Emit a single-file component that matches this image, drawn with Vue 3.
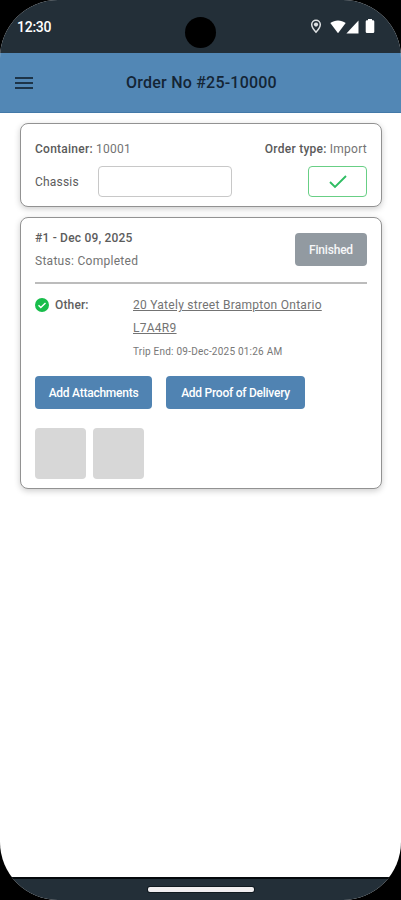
<template>
  <div class="device">
    <div class="screen">
      <header class="status-bar">
        <span class="clock">12:30</span>
        <span class="camera"></span>
        <div class="status-icons">
          <svg class="pin" width="12" height="15" viewBox="0 0 12 15">
            <path
              d="M6 1.200a4.300 4.300 0 0 0-4.300 4.300C1.700 8.600 6 13.200 6 13.200s4.300-4.600 4.300-7.700A4.300 4.300 0 0 0 6 1.200z"
              fill="none"
              stroke="#dde0e2"
              stroke-width="1.500"
            />
            <circle cx="6" cy="5.600" r="2.100" fill="#dde0e2" />
          </svg>
          <svg class="wifi" width="16" height="14" viewBox="0 0 16 14">
            <path d="M.3 3.100C4.800-.4 11.200-.4 15.700 3.100L8 13.200z" fill="#fff" />
          </svg>
          <svg class="signal" width="13" height="14" viewBox="0 0 13 14">
            <path d="M12.500.6v13H.4z" fill="#fff" />
          </svg>
          <svg class="battery" width="10" height="15" viewBox="0 0 10 15">
            <path
              d="M3 0h4v1.300h1a1.300 1.300 0 0 1 1.300 1.300v10.200a1.300 1.300 0 0 1-1.300 1.300H2a1.300 1.300 0 0 1-1.300-1.300V2.600A1.300 1.300 0 0 1 2 1.300h1z"
              fill="#fff"
            />
          </svg>
        </div>
      </header>

      <nav class="app-bar">
        <button class="menu" aria-label="Menu"><i></i><i></i><i></i></button>
        <h1>Order No #{{ order.number }}</h1>
      </nav>

      <main>
        <section class="card summary">
          <div class="row">
            <p class="container-no"><b>Container:</b> {{ order.container }}</p>
            <p class="order-type"><b>Order type:</b> {{ order.type }}</p>
          </div>
          <div class="row chassis-row">
            <label for="chassis">Chassis</label>
            <input id="chassis" v-model="chassis" type="text" />
            <button class="confirm" aria-label="Save chassis">
              <svg width="18" height="14" viewBox="0 0 18 14">
                <path d="M1 7l5 5L17 1" fill="none" stroke="#2fbd63" stroke-width="1.900" />
              </svg>
            </button>
          </div>
        </section>

        <section class="card trip">
          <div class="trip-head">
            <div>
              <h2>#1 - Dec 09, 2025</h2>
              <p class="status">Status: Completed</p>
            </div>
            <button class="finished">Finished</button>
          </div>

          <div class="stop">
            <svg class="done" width="14" height="14" viewBox="0 0 14 14">
              <circle cx="7" cy="7" r="7" fill="#18bd4b" />
              <path d="M3.500 7.300l2.300 2.300 4.700-4.700" fill="none" stroke="#fff" stroke-width="1.400" />
            </svg>
            <span class="stop-label">Other:</span>
            <div class="stop-info">
              <a class="address">20 Yately street Brampton Ontario<br />L7A4R9</a>
              <p class="trip-end">Trip End: 09-Dec-2025 01:26 AM</p>
            </div>
          </div>

          <div class="actions">
            <button class="attach">Add Attachments</button>
            <button class="proof">Add Proof of Delivery</button>
          </div>

          <div class="thumbs">
            <span v-for="n in 2" :key="n" class="thumb"></span>
          </div>
        </section>
      </main>

      <footer class="nav-bar"><span class="handle"></span></footer>
    </div>
  </div>
</template>

<script setup>
import { ref } from 'vue'

const chassis = ref('')

const order = {
  number: '25-10000',
  container: '10001',
  type: 'Import',
}
</script>

<style>
body {
  margin: 0;
  background: #000;
}
</style>

<style scoped>
* {
  box-sizing: border-box;
}

h1,
h2,
p {
  margin: 0;
}

button {
  font-family: inherit;
  padding: 0;
  border: 0;
}

.device {
  width: 401px;
  height: 900px;
  background: #000;
  font-family: Roboto, sans-serif;
}

.screen {
  display: flex;
  flex-direction: column;
  height: 900px;
  overflow: hidden;
  border-radius: 58px;
  background: #fff;
}

.status-bar {
  position: relative;
  display: flex;
  flex: none;
  align-items: center;
  justify-content: space-between;
  height: 53px;
  padding: 0 26px 0 17px;
  background: #232f38;
}

.clock {
  color: #fff;
  font-size: 14px;
  font-weight: 500;
  letter-spacing: -0.25px;
}

.camera {
  position: absolute;
  top: 17px;
  left: 185px;
  width: 31px;
  height: 31px;
  border-radius: 50%;
  background: #000;
}

.status-icons {
  display: flex;
  align-items: center;
}

.wifi {
  margin-left: 8px;
}

.battery {
  margin-left: 6px;
}

.app-bar {
  display: flex;
  flex: none;
  align-items: center;
  height: 60px;
  padding: 0 15px;
  background: #5287b5;
  border-bottom: 1px solid #4379a8;
}

.menu {
  display: flex;
  flex-direction: column;
  gap: 3px;
  width: 18px;
  background: none;
}

.menu i {
  height: 2px;
  background: #1d3448;
}

h1 {
  flex: 1;
  padding-right: 16px;
  color: #142535;
  font-size: 16px;
  font-weight: 500;
  letter-spacing: 0.22px;
  line-height: 22px;
  text-align: center;
}

main {
  display: flex;
  flex: 1;
  flex-direction: column;
  gap: 10px;
  padding: 10px 19px 0 20px;
}

.card {
  padding: 0 14px;
  border: 1px solid #929292;
  border-radius: 8px;
  background: #fff;
  box-shadow: 0 2px 6px rgba(0, 0, 0, 0.2);
  color: #737373;
  font-size: 12px;
}

.summary {
  height: 84px;
}

.row {
  display: flex;
  align-items: center;
  justify-content: space-between;
}

.summary .row:first-child {
  height: 20px;
  margin-top: 15px;
}

.row p {
  letter-spacing: 0.25px;
}

b {
  color: #5a5a5a;
  font-weight: 500;
}

.chassis-row {
  height: 31px;
  margin-top: 7px;
}

label {
  width: 63px;
  color: #5c5c5c;
  letter-spacing: 0.2px;
}

input {
  width: 134px;
  height: 31px;
  border: 1px solid #c8c8c8;
  border-radius: 4px;
  background: #fff;
}

.confirm {
  display: flex;
  align-items: center;
  justify-content: center;
  width: 59px;
  height: 31px;
  margin-left: auto;
  border: 1px solid #68cf85;
  border-radius: 4px;
  background: #fff;
}

.trip {
  height: 272px;
}

.trip-head {
  display: flex;
  justify-content: space-between;
  height: 66px;
  padding-top: 9px;
  border-bottom: 2px solid #bcbcbc;
}

h2 {
  color: #5c5c5c;
  font-size: 12px;
  font-weight: 500;
  letter-spacing: 0.2px;
  line-height: 23px;
}

.status {
  letter-spacing: 0.28px;
  line-height: 23px;
}

.finished {
  width: 72px;
  height: 33px;
  margin-top: 6px;
  border-radius: 4px;
  background: #929aa1;
  color: #f6f7f8;
  font-size: 12px;
  font-weight: 500;
  letter-spacing: -0.2px;
}

.stop {
  display: flex;
  height: 92px;
  padding-top: 10px;
  line-height: 23px;
}

.done {
  flex: none;
  margin-top: 4px;
}

.stop-label {
  width: 78px;
  margin-left: 6px;
  color: #606060;
  font-weight: 500;
  letter-spacing: 0.15px;
}

.stop-info {
  flex: 1;
  white-space: nowrap;
}

.address {
  letter-spacing: 0.27px;
  text-decoration: underline;
}

.trip-end {
  color: #777;
  font-size: 10px;
  letter-spacing: 0.22px;
}

.actions {
  display: flex;
  gap: 14px;
}

.actions button {
  height: 33px;
  border-radius: 4px;
  background: #5083b2;
  color: #fff;
  font-size: 12px;
  font-weight: 500;
  letter-spacing: -0.25px;
}

.attach {
  width: 117px;
}

.proof {
  width: 139px;
}

.thumbs {
  display: flex;
  gap: 7px;
  margin-top: 19px;
}

.thumb {
  width: 51px;
  height: 51px;
  border-radius: 4px;
  background: #d7d7d7;
}

.nav-bar {
  display: flex;
  flex: none;
  align-items: center;
  justify-content: center;
  height: 23px;
  border-top: 2px solid #05090c;
  background: #232f38;
}

.handle {
  width: 106px;
  height: 5px;
  border-radius: 2px;
  background: #f0eef0;
  box-shadow: 0 0 0 1px #111a20;
}
</style>
